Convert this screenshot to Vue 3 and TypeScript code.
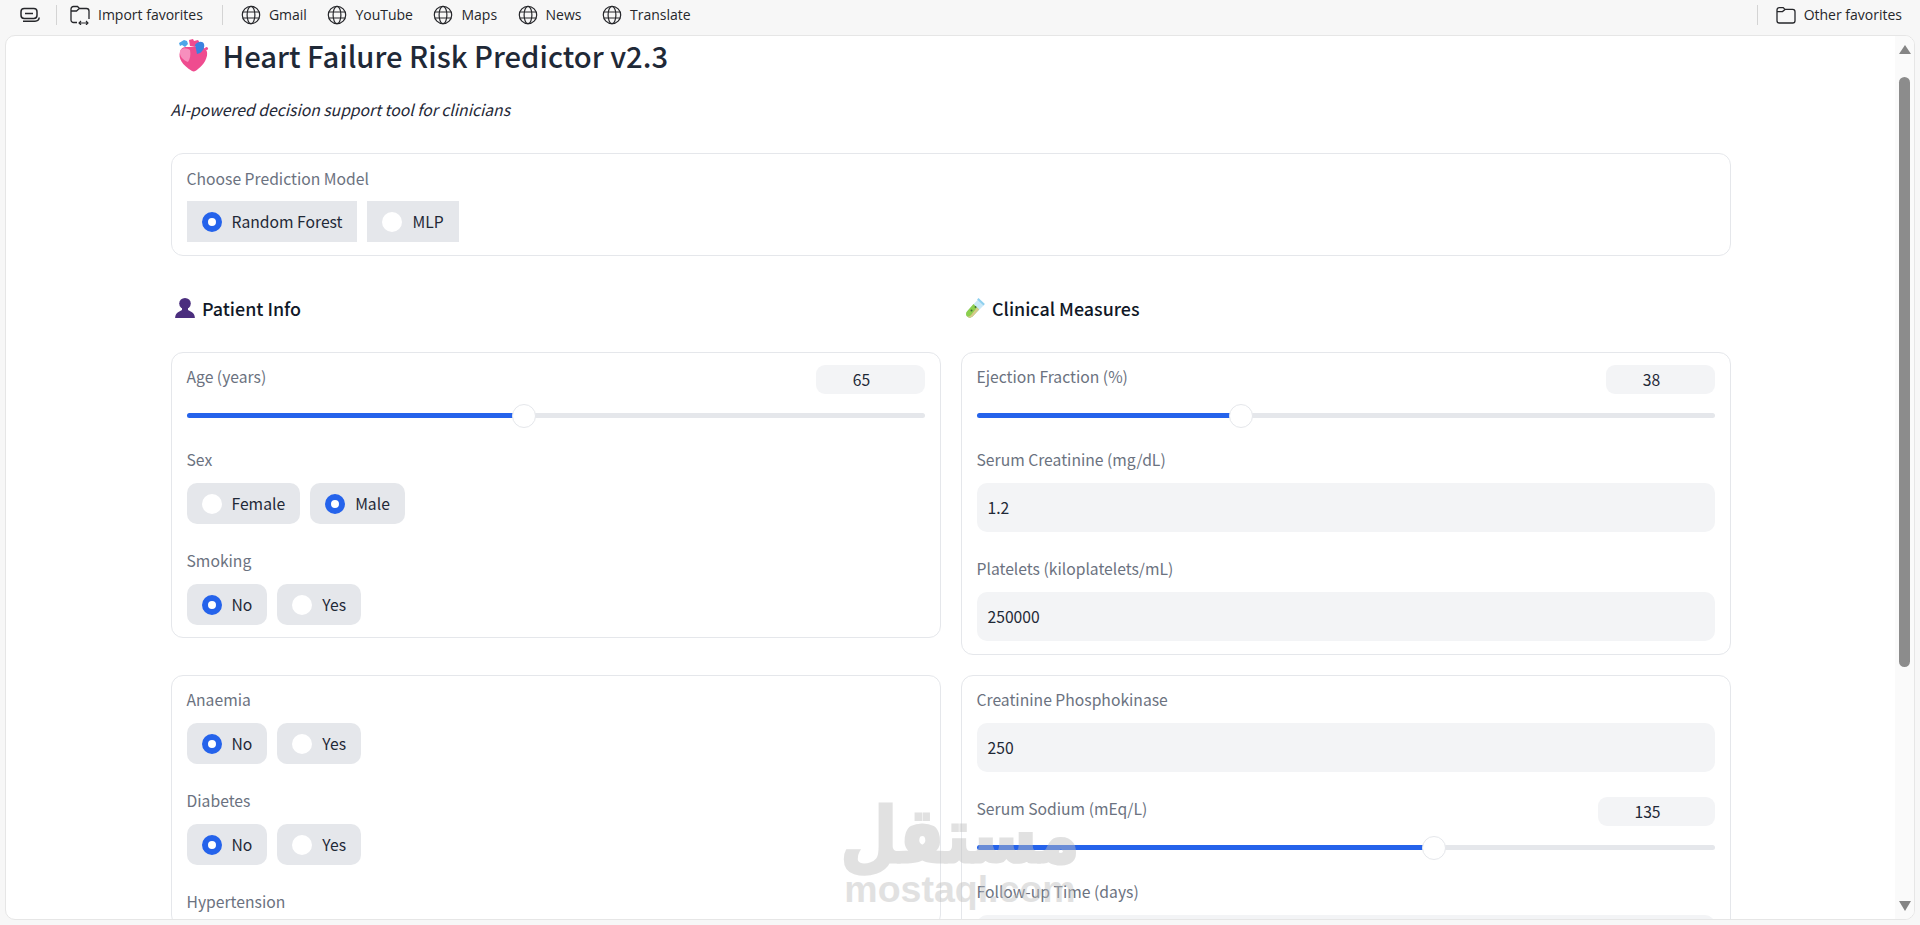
<script setup lang="ts">
const links: string[] = ['Gmail', 'YouTube', 'Maps', 'News', 'Translate']

interface Choice { label: string; options: string[]; selected: string }
const sexField: Choice = { label: 'Sex', options: ['Female', 'Male'], selected: 'Male' }
const smoking: Choice = { label: 'Smoking', options: ['No', 'Yes'], selected: 'No' }
const lower: Choice[] = [
  { label: 'Anaemia', options: ['No', 'Yes'], selected: 'No' },
  { label: 'Diabetes', options: ['No', 'Yes'], selected: 'No' },
]
const ageFill = '45.7%'
const efFill = '35.9%'
const naFill = '62%'
</script>

<template>
  <div class="window">
    <nav class="bar">
      <svg class="ico" viewBox="0 0 20 20" fill="none" stroke="#26272b" stroke-width="1.5">
        <rect x="1" y="3.5" width="16" height="10" rx="3.200" />
        <path d="M5 8.500h8" />
        <path d="M3 16.200h12c2.400 0 4-1.400 4.200-3.700" />
      </svg>
      <span class="sep first"></span>
      <span class="item import">
        <svg class="ico" viewBox="0 0 20 20" fill="none" stroke="#26272b" stroke-width="1.3">
          <path d="M7 17.500H3.500C2.200 17.500 1 16.400 1 15V4C1 2.600 2 1.500 3.500 1.500H7.500L9.500 3.500H16.500C18 3.500 19 4.500 19 6V14" />
          <path d="M1 6h5.500L9 3.700" />
          <path d="M9 18h9M11 16l-2 2 2 2M16 16l2 2-2 2" stroke-width="1.100" />
        </svg>
        Import favorites
      </span>
      <span class="sep"></span>
      <span v-for="l in links" :key="l" class="item link">
        <svg class="ico" viewBox="0 0 20 20" fill="none" stroke="#26272b" stroke-width="1.2">
          <circle cx="10" cy="10" r="8.700" />
          <ellipse cx="10" cy="10" rx="3.900" ry="8.700" />
          <path d="M1.800 7h16.400M1.800 13h16.400" />
        </svg>
        {{ l }}
      </span>
      <span class="spring"></span>
      <span class="sep"></span>
      <span class="item other">
        <svg class="ico" viewBox="0 0 20 20" fill="none" stroke="#26272b" stroke-width="1.3">
          <path d="M1 5V15.700C1 17 2 18 3.300 18h13.400c1.300 0 2.300-1 2.300-2.300V6.700c0-1.300-1-2.300-2.300-2.300H9L7.200 2.600H3.300C2 2.600 1 3.600 1 5z" />
          <path d="M1 6.600h5.500L9 4.400" />
        </svg>
        Other favorites
      </span>
    </nav>

    <div class="frame">
      <div class="page">
        <main class="main">
          <h1 class="title">
            <svg class="heart" viewBox="0 0 32 34">
              <path d="M3 14C1 20 5 27 15 33c2 1 4 0 6-2 6-4 10-12 9-17-1-5-6-6-10-5H10C6 9 4 10 3 14z" fill="#ef4c8f" />
              <path d="M3 13c2-4 7-3 10-1 1 5 0 9-2 12C6 22 2 18 3 13z" fill="#f78fbd" />
              <path d="M12 2l4-1 1 2 4-1 2 3-5 4-5-1z" fill="#ef4c8f" />
              <path d="M2 5l5-3 3 1 1 3-3 3-3-2-2 1z" fill="#4da6e8" />
              <path d="M18 7c3-4 8-4 9-1s-1 7-4 9l-3 1-1-5z" fill="#3b82e0" />
              <circle cx="29.500" cy="10.500" r="1.500" fill="#ef4c8f" />
            </svg>
            <span>Heart Failure Risk Predictor v2.3</span>
          </h1>
          <p class="sub">AI-powered decision support tool for clinicians</p>

          <section class="card model">
            <div class="lab">Choose Prediction Model</div>
            <div class="opts">
              <label class="chip square"><i class="radio on"></i>Random Forest</label>
              <label class="chip square"><i class="radio"></i>MLP</label>
            </div>
          </section>

          <div class="cols">
            <h2 class="head">
              <svg class="emo" viewBox="0 0 20 20">
                <ellipse cx="10" cy="5.500" rx="5.800" ry="5.500" fill="#4b2e7e" />
                <path d="M7 9h6v3l4 2.200c1.800 1 2.700 3 2.900 5.800H.1c.2-2.800 1.100-4.800 2.900-5.800L7 12z" fill="#4b2e7e" />
              </svg>
              Patient Info
            </h2>
            <h2 class="head">
              <svg class="emo" viewBox="0 0 20 20">
                <path d="M13 1.500l6 5.500L7.500 18.500c-1.500 1.500-4 1.500-5.400.100s-1.500-3.900 0-5.400z" fill="#c9e8f7" />
                <path d="M8.500 6l5.500 5.500-6.500 7c-1.500 1.500-4 1.500-5.400.100s-1.500-3.900 0-5.400z" fill="#8ccf4d" />
                <path d="M14 11.500l-6.500 7c-1.500 1.500-4 1.500-5.400.100l.4-.1c1.500 0 2.500-.4 3.600-1.500l5.900-7.500z" fill="#d8c98a" />
                <path d="M12.800 .8l6.400 6" stroke="#8fd0ef" stroke-width="2" />
                <circle cx="6.500" cy="12.500" r="1" fill="#3f6d3a" />
                <circle cx="10.500" cy="9" r=".9" fill="#3f6d3a" />
              </svg>
              Clinical Measures
            </h2>

            <section class="card">
              <div class="field slide">
                <div class="row">
                  <span class="lab">Age (years)</span>
                  <span class="num">65</span>
                </div>
                <div class="track"><b :style="{ width: ageFill }"></b><i :style="{ left: ageFill }"></i></div>
              </div>
              <div class="field">
                <div class="lab">{{ sexField.label }}</div>
                <div class="opts">
                  <label v-for="o in sexField.options" :key="o" class="chip"><i class="radio" :class="{ on: o === sexField.selected }"></i>{{ o }}</label>
                </div>
              </div>
              <div class="field">
                <div class="lab">{{ smoking.label }}</div>
                <div class="opts">
                  <label v-for="o in smoking.options" :key="o" class="chip"><i class="radio" :class="{ on: o === smoking.selected }"></i>{{ o }}</label>
                </div>
              </div>
            </section>
            <section class="card tall">
              <div class="field slide">
                <div class="row">
                  <span class="lab">Ejection Fraction (%)</span>
                  <span class="num">38</span>
                </div>
                <div class="track"><b :style="{ width: efFill }"></b><i :style="{ left: efFill }"></i></div>
              </div>
              <div class="field">
                <div class="lab">Serum Creatinine (mg/dL)</div>
                <div class="input">1.2</div>
              </div>
              <div class="field">
                <div class="lab">Platelets (kiloplatelets/mL)</div>
                <div class="input">250000</div>
              </div>
            </section>

            <section class="card second">
              <div v-for="f in lower" :key="f.label" class="field">
                <div class="lab">{{ f.label }}</div>
                <div class="opts">
                  <label v-for="o in f.options" :key="o" class="chip"><i class="radio" :class="{ on: o === f.selected }"></i>{{ o }}</label>
                </div>
              </div>
              <div class="field">
                <div class="lab">Hypertension</div>
              </div>
            </section>
            <section class="card second">
              <div class="field">
                <div class="lab">Creatinine Phosphokinase</div>
                <div class="input">250</div>
              </div>
              <div class="field slide">
                <div class="row">
                  <span class="lab">Serum Sodium (mEq/L)</span>
                  <span class="num wide">135</span>
                </div>
                <div class="track"><b :style="{ width: naFill }"></b><i :style="{ left: naFill }"></i></div>
              </div>
              <div class="field">
                <div class="lab">Follow-up Time (days)</div>
                <div class="input"></div>
              </div>
            </section>
          </div>
        </main>
        <div class="mark" aria-hidden="true">
          <span class="ar">مستقل</span>
          <span class="en">mostaql.com</span>
        </div>
      </div>
      <aside class="scroll">
        <span class="arrow up"></span>
        <span class="thumb"></span>
        <span class="arrow down"></span>
      </aside>
    </div>
  </div>
</template>

<style>
html, body { margin: 0; height: 100%; overflow: hidden; background: #f7f7f7; }
</style>

<style scoped>
.window {
  height: 925px;
  display: flex;
  flex-direction: column;
  background: #f7f7f7;
  overflow: hidden;
}
.bar {
  height: 35px;
  flex: none;
  display: flex;
  align-items: center;
  padding: 0 18px 5px 20px;
  box-sizing: border-box;
  font: 14px/20px "Open Sans", "Noto Sans", sans-serif;
  color: #26272b;
}
.ico { width: 20px; height: 20px; flex: none; }
.sep { width: 1px; height: 20px; background: #d4d4d4; margin-right: 14px; }
.sep.first { margin-left: 16px; margin-right: 13px; }
.item { display: flex; align-items: center; gap: 8px; white-space: nowrap; }
.import { margin-right: 19px; }
.link { margin-right: 20.500px; }
.spring { flex: 1; }
.sep:not(.first) + .link { margin-left: 4px; }
.spring + .sep { margin-right: 18px; }
.frame {
  width: 1910px;
  height: 885px;
  margin-left: 5px;
  flex: none;
  display: flex;
  background: #fff;
  border: 1px solid #e6e6e6;
  border-radius: 10px;
  box-sizing: border-box;
  overflow: hidden;
}
.page { flex: 1; position: relative; overflow: hidden; }
.main {
  width: 1560px;
  margin: 0 auto;
  font-family: "Noto Sans CJK SC", "Noto Sans", sans-serif;
  color: #1f2937;
}
.title {
  display: flex;
  align-items: center;
  height: 38px;
  margin: 0;
  padding-left: 6px;
  gap: 14px;
  font-size: 29.200px;
  font-weight: 500;
  line-height: 38px;
}
.heart { width: 32px; height: 34px; flex: none; }
.sub {
  margin: 24px 0 0;
  font-size: 15.700px;
  line-height: 24px;
  font-style: italic;
}
.card {
  box-sizing: border-box;
  border: 1px solid #e5e7eb;
  border-radius: 12px;
  padding: 12px 15px;
  background: #fff;
  align-self: start;
}
.tall { padding-bottom: 13px; }
.model { margin-top: 31px; height: 103px; padding-top: 13px; }
.model .opts { margin-top: 10px; }
.lab { font-size: 15.700px; line-height: 24px; color: #6b7280; }
.opts { display: flex; gap: 10px; margin-top: 11px; }
.chip {
  display: flex;
  align-items: center;
  height: 41px;
  padding: 0 15px;
  gap: 10px;
  background: #e5e7eb;
  border-radius: 10px;
  font-size: 15.700px;
  color: #1f2937;
}
.chip.square { border-radius: 0; padding-right: 14px; }
.chip.square + .chip.square { padding-right: 15px; gap: 11px; }
.radio {
  width: 20px;
  height: 20px;
  border-radius: 50%;
  background: #fff;
  box-sizing: border-box;
  flex: none;
}
.radio.on { border: 6px solid #2563eb; }
.cols {
  display: grid;
  grid-template-columns: 770px 770px;
  column-gap: 20px;
}
.head {
  display: flex;
  align-items: center;
  gap: 7.500px;
  height: 24px;
  margin: 40px 0 32px;
  padding-left: 4px;
  font-size: 17.900px;
  font-weight: 500;
  line-height: 24px;
  color: #111827;
}
.emo { width: 20px; height: 20px; flex: none; }
.second { margin-top: 20px; }
.field + .field { margin-top: 25px; }
.slide { padding-bottom: 5px; }
.row { display: flex; justify-content: space-between; align-items: flex-start; }
.num {
  width: 109px;
  height: 29px;
  box-sizing: border-box;
  padding-right: 17px;
  background: #f3f4f6;
  border-radius: 9px;
  text-align: center;
  font-size: 15.700px;
  line-height: 29px;
  color: #1f2937;
}
.num.wide { width: 117px; }
.track {
  position: relative;
  height: 5px;
  margin-top: 19px;
  background: #e5e7eb;
  border-radius: 3px;
}
.track b {
  position: absolute;
  left: 0;
  top: 0;
  bottom: 0;
  background: #2563eb;
  border-radius: 3px;
}
.track i {
  position: absolute;
  top: 50%;
  width: 24px;
  height: 24px;
  box-sizing: border-box;
  border: 1px solid #e5e7eb;
  border-radius: 50%;
  background: #fff;
  transform: translate(-50%, -50%);
}
.input {
  margin-top: 11px;
  height: 49px;
  box-sizing: border-box;
  padding: 0 11px;
  background: #f3f4f6;
  border-radius: 10px;
  font-size: 15.700px;
  line-height: 49px;
  color: #1f2937;
}
.mark {
  position: absolute;
  left: 834px;
  top: 752px;
  width: 240px;
  display: flex;
  flex-direction: column;
  align-items: center;
  color: rgb(190, 190, 190);
  opacity: 0.45;
  pointer-events: none;
  font-family: "DejaVu Sans", sans-serif;
  font-weight: 700;
}
.ar {
  font-size: 76px;
  line-height: 84px;
  white-space: nowrap;
  transform: translateY(6px) scaleX(0.860);
  -webkit-text-stroke: 3px rgb(190, 190, 190);
}
.en { font-size: 37.500px; line-height: 34px; font-family: "Liberation Sans", sans-serif; }
.scroll {
  width: 19px;
  flex: none;
  background: #fafafa;
  display: flex;
  flex-direction: column;
  align-items: center;
  padding: 9px 0 8px;
  box-sizing: border-box;
}
.arrow {
  width: 0;
  height: 0;
  border-left: 6.500px solid transparent;
  border-right: 6.500px solid transparent;
}
.arrow.up { border-bottom: 9px solid #858585; }
.arrow.down { border-top: 10px solid #858585; margin-top: auto; }
.thumb {
  width: 11px;
  height: 590px;
  margin-top: 23px;
  background: #8c8c8c;
  border-radius: 6px;
}
</style>
